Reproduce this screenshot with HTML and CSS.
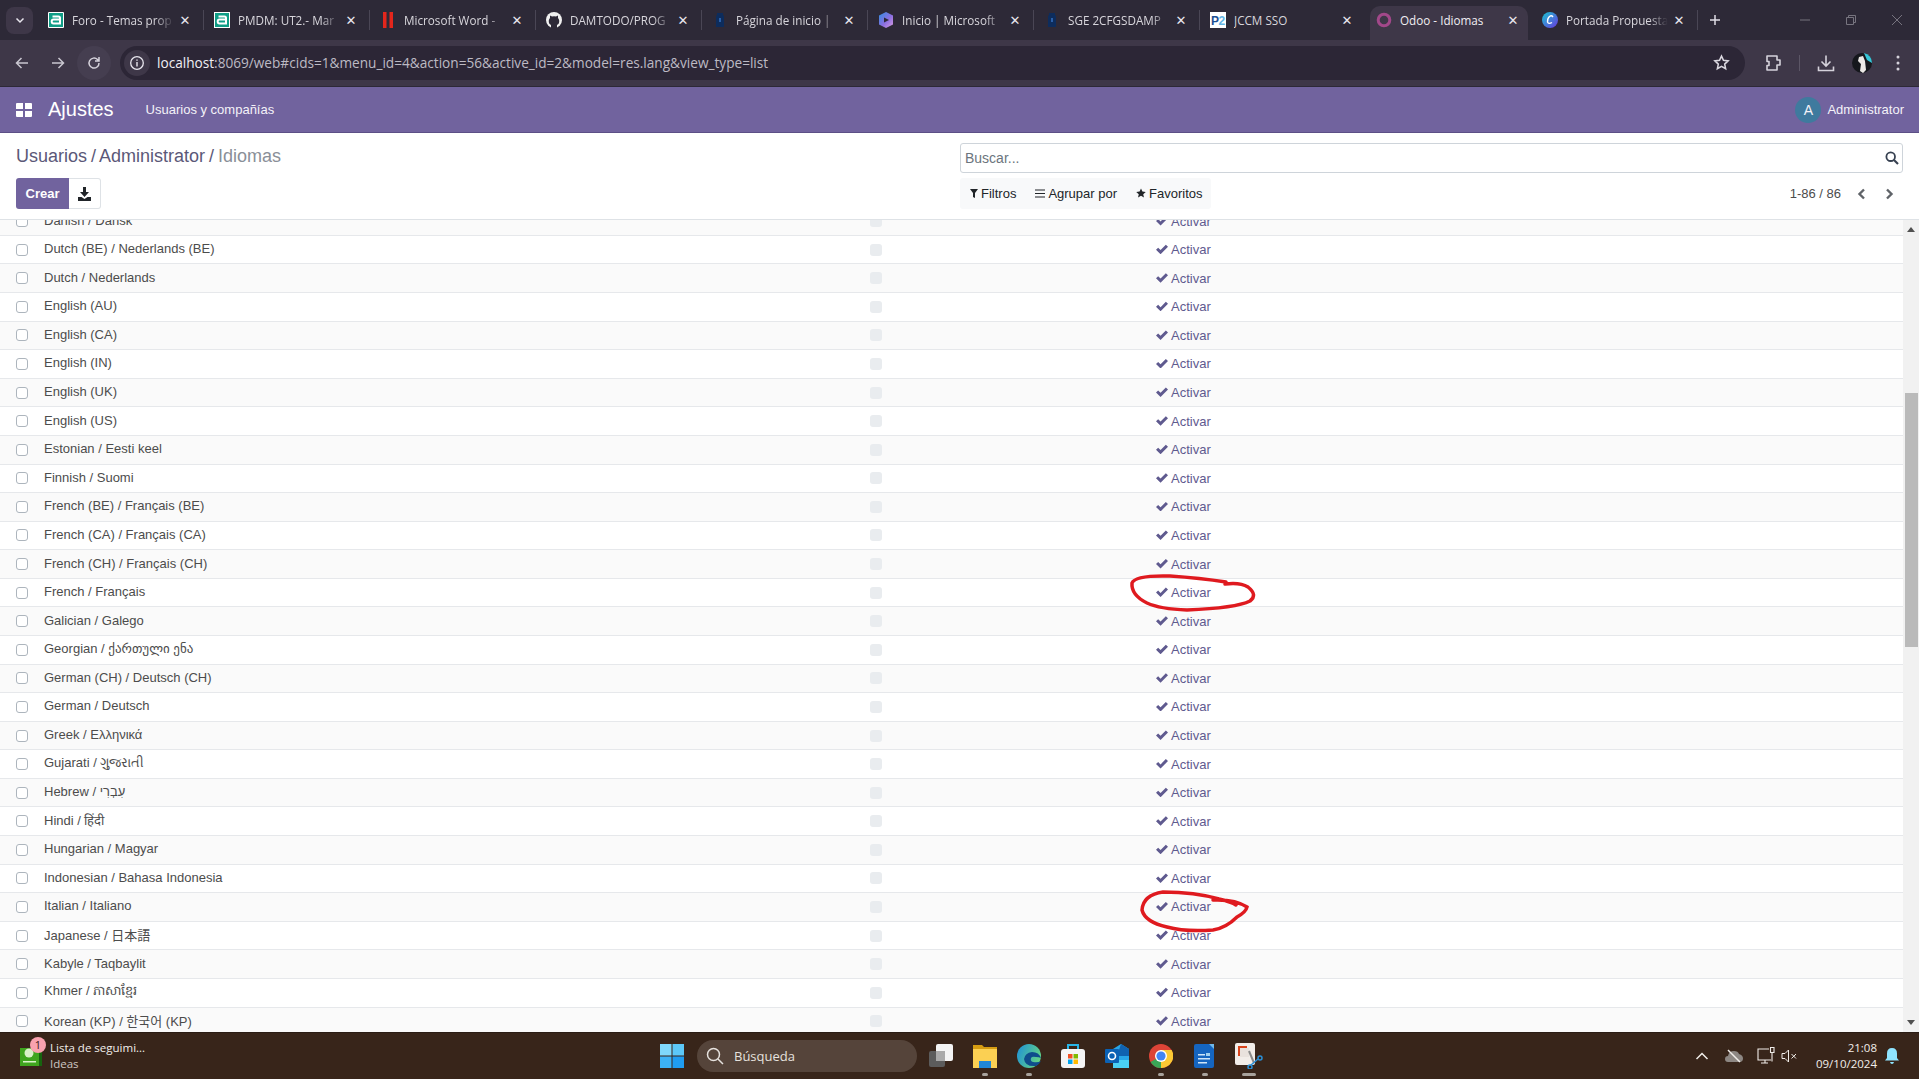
FILE: index.html
```html
<!DOCTYPE html>
<html lang="es">
<head>
  <meta charset="UTF-8" />
  <title>Odoo - Idiomas</title>
  <link rel="stylesheet" href="styles.css">
</head>
<body>

  <!-- browser tabs -->
  <div class="tabstrip">
    <button class="tab-search"><svg width="10" height="10" viewBox="0 0 10 10"><path d="M1.5 3.5 5 7l3.5-3.5" fill="none" stroke="#e8e6ee" stroke-width="1.5"/></svg></button>
    <div class="tab">
      <svg class="favicon" viewBox="0 0 16 16"><rect width="16" height="16" rx="1" fill="#fff"/><path d="M1 1h14v14H1z" fill="#0f9d86"/><path d="M4.5 4.5h6q1.5 0 1.5 1.5v5.500H5.500q-1.800 0-1.800-2t1.800-2H12" fill="none" stroke="#fff" stroke-width="2"/></svg>
      <span class="tab-title">Foro - Temas prop</span><span class="tab-close">✕</span>
    </div>
    <div class="tab">
      <svg class="favicon" viewBox="0 0 16 16"><path d="M0 0h16v16H0z" fill="#fff"/><path d="M1 1h14v14H1z" fill="#0f9d86"/><path d="M4.500 4.500h6q1.500 0 1.500 1.500v5.500H5.500q-1.800 0-1.800-2t1.800-2H12" fill="none" stroke="#fff" stroke-width="2"/></svg>
      <span class="tab-title">PMDM: UT2.- Mar</span><span class="tab-close">✕</span>
    </div>
    <div class="tab">
      <svg class="favicon" viewBox="0 0 16 16"><path d="M3 0h3.500v16H3zM9.500 0H13v16H9.500z" fill="#e3261c"/></svg>
      <span class="tab-title">Microsoft Word -</span><span class="tab-close">✕</span>
    </div>
    <div class="tab">
      <svg class="favicon" viewBox="0 0 16 16"><circle cx="8" cy="8" r="8" fill="#f0f0f0"/><path d="M5 16v-3Q2.500 12 2.800 8.500 3 7 4 6V3.500L6 4.500q2-.6 4 0l2-1V6q1 1 1.200 2.500.3 3.500-2.200 4.500v3z" fill="#2d2937"/></svg>
      <span class="tab-title">DAMTODO/PROG</span><span class="tab-close">✕</span>
    </div>
    <div class="tab">
      <svg class="favicon" viewBox="0 0 16 16"><path d="M5 1h6v2l1 1v11H4V4l1-1z" fill="#0d2c5c"/><path d="M7 6h2v4H7z" fill="#2a5fa8"/></svg>
      <span class="tab-title">Página de inicio |</span><span class="tab-close">✕</span>
    </div>
    <div class="tab">
      <svg class="favicon" viewBox="0 0 16 16"><defs><linearGradient id="m365" x1="0" y1="0" x2="1" y2="1"><stop offset="0" stop-color="#2f8fe0"/><stop offset=".55" stop-color="#8a6ee0"/><stop offset="1" stop-color="#d99adf"/></linearGradient></defs><path d="M8 0l7 3.500v9L8 16l-7-3.500v-9z" fill="url(#m365)"/><path d="M6 5.500 11 8l-5 2.500z" fill="#2d2937"/></svg>
      <span class="tab-title">Inicio | Microsoft</span><span class="tab-close">✕</span>
    </div>
    <div class="tab">
      <svg class="favicon" viewBox="0 0 16 16"><path d="M5 1h6v2l1 1v11H4V4l1-1z" fill="#0d2c5c"/><path d="M7 6h2v4H7z" fill="#2a5fa8"/></svg>
      <span class="tab-title">SGE 2CFGSDAMP</span><span class="tab-close">✕</span>
    </div>
    <div class="tab tab-before-active">
      <svg class="favicon" viewBox="0 0 16 16"><rect width="16" height="16" fill="#fff"/><text x="1" y="12.500" font-size="12" font-weight="700" font-family="Liberation Sans" fill="#1c4f93">P</text><text x="8.500" y="12.500" font-size="12" font-weight="700" font-family="Liberation Sans" fill="#62b5e5">2</text></svg>
      <span class="tab-title">JCCM SSO</span><span class="tab-close">✕</span>
    </div>
    <div class="tab tab-active">
      <svg class="favicon" viewBox="0 0 16 16"><circle cx="8" cy="8" r="5.800" fill="none" stroke="#a2488a" stroke-width="3"/></svg>
      <span class="tab-title">Odoo - Idiomas</span><span class="tab-close">✕</span>
    </div>
    <div class="tab">
      <svg class="favicon" viewBox="0 0 16 16"><defs><linearGradient id="canva" x1="0" y1="0" x2="1" y2="1"><stop offset="0" stop-color="#19c5cf"/><stop offset="1" stop-color="#6a37e0"/></linearGradient></defs><circle cx="8" cy="8" r="8" fill="url(#canva)"/><path d="M11 5Q9.500 3 7.500 4.500T5.500 10q1 2.500 4.500 .5" fill="none" stroke="#fff" stroke-width="1.400"/></svg>
      <span class="tab-title">Portada Propuesta</span><span class="tab-close">✕</span>
    </div>
    <svg class="new-tab" width="12" height="12" viewBox="0 0 12 12"><path d="M6 1v10M1 6h10" stroke="#e0dde6" stroke-width="1.500"/></svg>
    <div class="window-controls">
      <svg width="12" height="12" viewBox="0 0 12 12"><path d="M1 6h10" stroke="#77747f"/></svg>
      <svg width="12" height="12" viewBox="0 0 12 12"><path d="M1.500 3.500h7v7h-7zM3.500 3.500v-2h7v7h-2" fill="none" stroke="#77747f"/></svg>
      <svg width="12" height="12" viewBox="0 0 12 12"><path d="M1 1l10 10M11 1 1 11" stroke="#77747f"/></svg>
    </div>
  </div>

  <!-- address bar -->
  <div class="toolbar">
    <svg class="tool-icon" width="16" height="16" viewBox="0 0 16 16"><path d="M14 8H3M7.500 3 2.500 8l5 5" fill="none" stroke="#c9c6d0" stroke-width="1.500"/></svg>
    <svg class="tool-icon" width="16" height="16" viewBox="0 0 16 16"><path d="M2 8h11M8.500 3l5 5-5 5" fill="none" stroke="#c9c6d0" stroke-width="1.500"/></svg>
    <div class="reload"><svg width="16" height="16" viewBox="0 0 16 16"><path d="M13 8a5 5 0 1 1-1.500-3.500L13 6M13 2v4H9" fill="none" stroke="#d5d2db" stroke-width="1.500"/></svg></div>
    <div class="omnibox">
      <span class="site-info"><svg width="16" height="16" viewBox="0 0 16 16"><circle cx="8" cy="8" r="6.300" fill="none" stroke="#e8e6ee" stroke-width="1.300"/><path d="M8 7v4.500M8 4.500v1.300" stroke="#e8e6ee" stroke-width="1.400"/></svg></span>
      <span class="url"><b>localhost</b>:8069/web#cids=1&amp;menu_id=4&amp;action=56&amp;active_id=2&amp;model=res.lang&amp;view_type=list</span>
      <svg class="star" width="17" height="17" viewBox="0 0 24 24"><path d="m12 3 2.800 6 6.500.8-4.800 4.400 1.300 6.500L12 17.400 6.200 20.700l1.300-6.500L2.700 9.800 9.200 9z" fill="none" stroke="#dbd8e0" stroke-width="2.200"/></svg>
    </div>
    <svg class="ext" width="18" height="18" viewBox="0 0 18 18"><path d="M3 2h10v4h3v5h-3v5H3v-4.500h2v-4H3z" fill="none" stroke="#d5d2db" stroke-width="1.600" stroke-linejoin="round"/></svg>
    <span class="tool-sep"></span>
    <svg class="down" width="18" height="18" viewBox="0 0 18 18"><path d="M9 1.500v10M4.500 7.500 9 12l4.500-4.500M1.500 12.500v4h15v-4" fill="none" stroke="#d5d2db" stroke-width="1.600"/></svg>
    <svg class="profile" width="20" height="20" viewBox="0 0 20 20"><circle cx="10" cy="10" r="10" fill="#15171c"/><path d="M12 0a10 10 0 0 1 8 10l-5-3z" fill="#35c6d8"/><path d="M7 4l4-1 2 5 1 9-3 3-3-2 1-7-3-3z" fill="#ece9e6"/></svg>
    <svg class="dots" width="4" height="16" viewBox="0 0 4 16"><circle cx="2" cy="2" r="1.500" fill="#d5d2db"/><circle cx="2" cy="8" r="1.500" fill="#d5d2db"/><circle cx="2" cy="14" r="1.500" fill="#d5d2db"/></svg>
  </div>

  <!-- odoo navbar -->
  <nav class="navbar">
    <svg class="apps" width="16" height="14" viewBox="0 0 16 14"><path d="M1 0h6v6H0V1q0-1 1-1zM9 0h6q1 0 1 1v5H9zM0 8h7v6H1q-1 0-1-1zM9 8h7v5q0 1-1 1H9z" fill="#fff"/></svg>
    <span class="brand">Ajustes</span>
    <a class="nav-link">Usuarios y compañías</a>
    <div class="user-menu">
      <span class="user-avatar">A</span>
      <span>Administrator</span>
    </div>
  </nav>

  <div class="control-panel">
    <div class="breadcrumb"><a>Usuarios</a> / <a>Administrator</a> / <span>Idiomas</span></div>
    <div class="searchbox">
      <span>Buscar...</span>
      <svg width="14" height="14" viewBox="0 0 14 14"><circle cx="5.700" cy="5.700" r="4.300" fill="none" stroke="#374151" stroke-width="1.800"/><path d="m9 9 4 4" stroke="#374151" stroke-width="2.200"/></svg>
    </div>
    <div class="main-buttons">
      <button class="btn-create">Crear</button>
      <button class="btn-download"><svg width="13" height="14" viewBox="0 0 13 14"><path d="M5 0h3v5h3L6.500 10 2 5h3zM0 10h3.500l3 2 3-2H13v4H0z" fill="#212529"/></svg></button>
    </div>
    <div class="search-tools">
      <div class="filter-bar">
        <span><svg width="8" height="9" viewBox="0 0 8 9"><path d="M0 0h8L5 4v5L3 8V4z" fill="#212529"/></svg>Filtros</span>
        <span><svg width="10" height="9" viewBox="0 0 10 9"><path d="M0 1h10M0 4.500h10M0 8h10" stroke="#212529" stroke-width="1.200"/></svg>Agrupar por</span>
        <span><svg width="10" height="10" viewBox="0 0 24 24"><path d="m12 1 3.400 7.400 8 .9-6 5.400 1.700 8L12 18.700l-7.100 4 1.700-8-6-5.400 8-.9z" fill="#212529"/></svg>Favoritos</span>
      </div>
      <div class="pager">
        <span class="pager-count">1-86 / 86</span>
        <svg width="9" height="12" viewBox="0 0 9 12"><path d="M7 1.500 2.500 6 7 10.500" fill="none" stroke="#5f6368" stroke-width="2.400"/></svg>
        <svg width="9" height="12" viewBox="0 0 9 12"><path d="M2 1.500 6.500 6 2 10.500" fill="none" stroke="#5f6368" stroke-width="2.400"/></svg>
      </div>
    </div>
  </div>

  <!-- language list, scrolled part way down -->
  <div class="list-area">
    <div class="list-rows">
      <div class="row"><span class="check"></span><span class="name">Danish / Dansk</span><span class="flag"></span><a class="activate">Activar</a></div>
      <div class="row"><span class="check"></span><span class="name">Dutch (BE) / Nederlands (BE)</span><span class="flag"></span><a class="activate">Activar</a></div>
      <div class="row"><span class="check"></span><span class="name">Dutch / Nederlands</span><span class="flag"></span><a class="activate">Activar</a></div>
      <div class="row"><span class="check"></span><span class="name">English (AU)</span><span class="flag"></span><a class="activate">Activar</a></div>
      <div class="row"><span class="check"></span><span class="name">English (CA)</span><span class="flag"></span><a class="activate">Activar</a></div>
      <div class="row"><span class="check"></span><span class="name">English (IN)</span><span class="flag"></span><a class="activate">Activar</a></div>
      <div class="row"><span class="check"></span><span class="name">English (UK)</span><span class="flag"></span><a class="activate">Activar</a></div>
      <div class="row"><span class="check"></span><span class="name">English (US)</span><span class="flag"></span><a class="activate">Activar</a></div>
      <div class="row"><span class="check"></span><span class="name">Estonian / Eesti keel</span><span class="flag"></span><a class="activate">Activar</a></div>
      <div class="row"><span class="check"></span><span class="name">Finnish / Suomi</span><span class="flag"></span><a class="activate">Activar</a></div>
      <div class="row"><span class="check"></span><span class="name">French (BE) / Français (BE)</span><span class="flag"></span><a class="activate">Activar</a></div>
      <div class="row"><span class="check"></span><span class="name">French (CA) / Français (CA)</span><span class="flag"></span><a class="activate">Activar</a></div>
      <div class="row"><span class="check"></span><span class="name">French (CH) / Français (CH)</span><span class="flag"></span><a class="activate">Activar</a></div>
      <div class="row"><span class="check"></span><span class="name">French / Français</span><span class="flag"></span><a class="activate">Activar</a></div>
      <div class="row"><span class="check"></span><span class="name">Galician / Galego</span><span class="flag"></span><a class="activate">Activar</a></div>
      <div class="row"><span class="check"></span><span class="name">Georgian / ქართული ენა</span><span class="flag"></span><a class="activate">Activar</a></div>
      <div class="row"><span class="check"></span><span class="name">German (CH) / Deutsch (CH)</span><span class="flag"></span><a class="activate">Activar</a></div>
      <div class="row"><span class="check"></span><span class="name">German / Deutsch</span><span class="flag"></span><a class="activate">Activar</a></div>
      <div class="row"><span class="check"></span><span class="name">Greek / Ελληνικά</span><span class="flag"></span><a class="activate">Activar</a></div>
      <div class="row"><span class="check"></span><span class="name">Gujarati / ગુજરાતી</span><span class="flag"></span><a class="activate">Activar</a></div>
      <div class="row"><span class="check"></span><span class="name">Hebrew / עִבְרִי</span><span class="flag"></span><a class="activate">Activar</a></div>
      <div class="row"><span class="check"></span><span class="name">Hindi / हिंदी</span><span class="flag"></span><a class="activate">Activar</a></div>
      <div class="row"><span class="check"></span><span class="name">Hungarian / Magyar</span><span class="flag"></span><a class="activate">Activar</a></div>
      <div class="row"><span class="check"></span><span class="name">Indonesian / Bahasa Indonesia</span><span class="flag"></span><a class="activate">Activar</a></div>
      <div class="row"><span class="check"></span><span class="name">Italian / Italiano</span><span class="flag"></span><a class="activate">Activar</a></div>
      <div class="row"><span class="check"></span><span class="name">Japanese / 日本語</span><span class="flag"></span><a class="activate">Activar</a></div>
      <div class="row"><span class="check"></span><span class="name">Kabyle / Taqbaylit</span><span class="flag"></span><a class="activate">Activar</a></div>
      <div class="row"><span class="check"></span><span class="name">Khmer / ភាសាខ្មែរ</span><span class="flag"></span><a class="activate">Activar</a></div>
      <div class="row"><span class="check"></span><span class="name">Korean (KP) / 한국어 (KP)</span><span class="flag"></span><a class="activate">Activar</a></div>
    </div>
    <div class="scrollbar">
      <span class="arrow-up"></span>
      <span class="thumb"></span>
      <span class="arrow-down"></span>
    </div>
  </div>

  <!-- windows taskbar -->
  <footer class="taskbar">
    <div class="widget">
      <svg width="22" height="20" viewBox="0 0 22 20"><path d="M0 2h21v18H0z" fill="#3fa51e"/><path d="M19 2h3v18h-3z" fill="#17640f"/><circle cx="9" cy="7" r="4.500" fill="#d9f2c8"/><path d="M3 15h13v1.500H3z" fill="#d9f2c8"/></svg>
      <span class="widget-badge">1</span>
      <div class="widget-text"><span>Lista de seguimi...</span><span class="widget-sub">Ideas</span></div>
    </div>
    <div class="task-center">
      <svg class="win-logo" width="24" height="24" viewBox="0 0 24 24"><path d="M0 0h11.500v11.500H0z" fill="#7fd8fb"/><path d="M12.500 0H24v11.500H12.500z" fill="#5cc8f8"/><path d="M0 12.500h11.500V24H0z" fill="#3cb2f5"/><path d="M12.500 12.500H24V24H12.500z" fill="#1f9cf0"/></svg>
      <div class="task-search">
        <svg width="18" height="18" viewBox="0 0 18 18"><circle cx="7.500" cy="7.500" r="6" fill="none" stroke="#e6e2de" stroke-width="1.500"/><path d="m12 12 5 5" stroke="#e6e2de" stroke-width="1.500"/></svg>
        <span>Búsqueda</span>
      </div>
      <div class="task-icons">
        <span class="task-icon"><svg width="24" height="24" viewBox="0 0 24 24"><rect y="7" width="16" height="16" rx="2" fill="#5c5c5c"/><rect x="7" y="0" width="17" height="17" rx="2" fill="#f4f4f4"/><rect x="7" y="7" width="9" height="10" fill="#aaa"/></svg></span>
        <span class="task-icon open"><svg width="24" height="24" viewBox="0 0 24 24"><path d="M0 1h9l2 2h13v4H0z" fill="#d59c12"/><path d="M0 5h24v19H0z" fill="#fbd053"/><path d="M6 17h12v7H6z" fill="#1f86d6"/></svg></span>
        <span class="task-icon open"><svg width="24" height="24" viewBox="0 0 24 24"><defs><linearGradient id="edge" x1="0" y1="0" x2="1" y2=".4"><stop offset="0" stop-color="#1d8fd8"/><stop offset="1" stop-color="#5fd08a"/></linearGradient></defs><circle cx="12" cy="12" r="12" fill="url(#edge)"/><path d="M24 14q-2-6-9-6-7 1-8 7 1 8 12 7 3-1 5-5-3 2-8 1-3-1-2-4 1-2 5-1 3 0 5 1z" fill="#0f4d8c"/></svg></span>
        <span class="task-icon"><svg width="24" height="24" viewBox="0 0 24 24"><path d="M7 6V1h10v5" fill="none" stroke="#29b6e8" stroke-width="2"/><rect y="5" width="24" height="19" rx="3" fill="#f5f5f5"/><path d="M7 10h4.500v4.500H7z" fill="#f25022"/><path d="M12.500 10H17v4.500h-4.500z" fill="#7fba00"/><path d="M7 15.500h4.500V20H7z" fill="#00a4ef"/><path d="M12.500 15.500H17V20h-4.500z" fill="#ffb900"/></svg></span>
        <span class="task-icon"><svg width="24" height="24" viewBox="0 0 24 24"><path d="M8 5l8-5 8 5v15q0 4-4 4H8z" fill="#27a6e8"/><path d="M16 0l8 5v7H12z" fill="#1062b0"/><path d="M8 16h16v8H8z" fill="#4ad1f5"/><rect y="5" width="14" height="14" rx="1" fill="#0b62b5"/><circle cx="7" cy="12" r="3.500" fill="none" stroke="#fff" stroke-width="1.600"/></svg></span>
        <span class="task-icon open"><svg width="24" height="24" viewBox="0 0 24 24"><circle cx="12" cy="12" r="12" fill="#dc4437"/><path d="M12 12 1.600 18A12 12 0 0 0 14 23.800z" fill="#3aa757"/><path d="M12 6h10.600A12 12 0 0 1 12 24z" fill="#fcc934"/><circle cx="12" cy="12" r="6" fill="#fff"/><circle cx="12" cy="12" r="4.600" fill="#4285f4"/></svg></span>
        <span class="task-icon open"><svg width="24" height="24" viewBox="0 0 24 24"><path d="M3 0h14l4 4v18q0 2-2 2H3q-2 0-2-2V2q0-2 2-2z" fill="#1565c0"/><path d="M16 0h5v5z" fill="#6fb8ea"/><path d="M5 10h7v1.500H5zM5 14h12v1.500H5zM5 18h9v1.500H5z" fill="#cfe6f8"/><path d="M13 9h4v3h-4z" fill="#9fd0f0"/></svg></span>
        <span class="task-icon wide"><svg width="28" height="26" viewBox="0 0 28 26"><rect width="20" height="22" rx="2" fill="#f2ede9"/><path d="M3 3h9v2H5v8H3z" fill="#d8431b"/><path d="M5 5h9v9H5z" fill="#e9e2dd"/><path d="M14 8l5 12" stroke="#8a8a8a" stroke-width="2"/><circle cx="15" cy="24" r="2" fill="none" stroke="#2a8fd6" stroke-width="1.500"/><circle cx="25" cy="15" r="2" fill="none" stroke="#2a8fd6" stroke-width="1.500"/><path d="M16 22l7-6" stroke="#2a8fd6" stroke-width="1.500"/></svg></span>
      </div>
    </div>
    <div class="tray">
      <svg class="tray-chevron" width="14" height="8" viewBox="0 0 14 8"><path d="M1.500 7 7 1.500 12.500 7" fill="none" stroke="#f0ece8" stroke-width="1.500"/></svg>
      <svg class="tray-cloud" width="18" height="14" viewBox="0 0 18 14"><path d="M3 13a3 3 0 0 1 0-6q1-5 6-5 4 0 5 3 4 1 4 4.500T14 13z" fill="#8d8783"/><path d="M3 1l12 12" stroke="#f0ece8" stroke-width="1.500"/></svg>
      <svg class="tray-net" width="18" height="18" viewBox="0 0 18 18"><path d="M12 2H1v11h13M8 13v3M4 16h7" fill="none" stroke="#f0ece8" stroke-width="1.100"/><path d="M13.500 .5h3.500v5h-3.500zM15 5.500v9" fill="none" stroke="#f0ece8" stroke-width="1.100"/></svg>
      <svg class="tray-sound" width="16" height="14" viewBox="0 0 16 14"><path d="M1 4.500h3L7.500 1v12L4 9.500H1zM10.500 5l4.500 4.500M15 5l-4.500 4.500" fill="none" stroke="#f0ece8"/></svg>
      <div class="clock"><span>21:08</span><span>09/10/2024</span></div>
      <svg class="bell" width="14" height="16" viewBox="0 0 14 16"><path d="M7 0q5 0 5 5.500V10l2 2.500H0L2 10V5.500Q2 0 7 0zM5 14h4q-.5 2-2 2t-2-2z" fill="#8fe4ff"/></svg>
    </div>
  </footer>

  <!-- hand-drawn marks on top of the screenshot -->
  <svg class="scribbles" width="1919" height="1079" viewBox="0 0 1919 1079">
    <path d="M1225 584Q1240 582 1248 587 1258 595 1250 601 1236 608 1187 610 1160 609 1147 603 1131 595 1132 583 1135 575 1170 576 1200 578 1226 582" />
    <path d="M1213 900Q1235 899 1247 907 1246 912 1237 917 1226 928 1213 930 1185 932 1167 927 1145 922 1142 910 1143 895 1163 892 1195 892 1219 899 1232 902 1236 905" />
  </svg>

</body>
</html>
```

FILE: styles.css
```css
* {
  box-sizing: border-box;
}

html, body {
  height: 100%;
}

body {
  position: relative;
  display: flex;
  flex-direction: column;
  margin: 0;
  overflow: hidden;
  font-family: "Liberation Sans", Arial, sans-serif;
  font-size: 13px;
  color: #4c4c4c;
  background: #fff;
}

/* browser chrome */
.tabstrip {
  display: flex;
  align-items: center;
  flex: 0 0 40px;
  padding-left: 6px;
  background: #2d2937;
  font-family: "Open Sans", sans-serif;
  font-size: 11.700px;
  color: #d8d6dc;
}

.tab-search {
  display: flex;
  align-items: center;
  justify-content: center;
  flex: 0 0 27px;
  height: 27px;
  margin-right: 5px;
  padding: 0;
  border: none;
  border-radius: 8px;
  background: #3e3748;
}

.tab {
  display: flex;
  align-items: center;
  flex: 0 0 166px;
  min-width: 0;
  height: 40px;
  padding: 0 12px 0 10px;
  position: relative;
}

.tab::after {
  content: "";
  position: absolute;
  right: 0;
  top: 10px;
  height: 20px;
  width: 1px;
  background: #4a4655;
}

.tab-before-active::after {
  display: none;
}

.tab-active {
  flex-basis: 158px;
  height: 34px;
  margin: 6px 4px 0;
  padding: 0 8px 6px 6px;
  border-radius: 10px 10px 0 0;
  background: #3e3748;
  color: #f0eef3;
}

.tab-active::after {
  display: none;
}

.favicon {
  flex: 0 0 16px;
  width: 16px;
  height: 16px;
  margin-right: 8px;
}

.tab-title {
  flex: 1;
  min-width: 0;
  white-space: nowrap;
  overflow: hidden;
  -webkit-mask-image: linear-gradient(to right, #000 80%, transparent 98%);
  mask-image: linear-gradient(to right, #000 80%, transparent 98%);
}

.tab-active .tab-title,
.tab-before-active .tab-title {
  -webkit-mask-image: none;
  mask-image: none;
}

.tab-close {
  flex: 0 0 14px;
  margin-left: 2px;
  font-family: "DejaVu Sans", sans-serif;
  font-size: 13px;
  text-align: center;
  color: #e8e6ee;
}

.new-tab {
  flex: 0 0 12px;
  margin-left: 11px;
}

.window-controls {
  display: flex;
  gap: 34px;
  margin-left: auto;
  padding-right: 16px;
}

.toolbar {
  display: flex;
  align-items: center;
  flex: 0 0 47px;
  padding: 0 0 1px 14px;
  background: #3e3748;
  border-bottom: 1px solid #2d2937;
}

.tool-icon {
  margin-right: 20px;
}

.reload {
  display: flex;
  align-items: center;
  justify-content: center;
  width: 34px;
  height: 34px;
  margin-left: -9px;
  border-radius: 50%;
  background: #453e50;
}

.omnibox {
  display: flex;
  align-items: center;
  width: 1625px;
  height: 34px;
  margin-left: 9px;
  padding: 0 15px 0 4px;
  border-radius: 17px;
  background: #2c2636;
  font-family: "Open Sans", sans-serif;
  font-size: 13.630px;
  color: #bdbac4;
}

.site-info {
  display: flex;
  align-items: center;
  justify-content: center;
  width: 26px;
  height: 26px;
  margin-right: 7px;
  border-radius: 50%;
  background: #3e3748;
}

.url b {
  font-weight: 400;
  color: #f1eff4;
}

.star {
  margin-left: auto;
}

.ext {
  margin-left: 19px;
}

.tool-sep {
  width: 1px;
  height: 16px;
  margin-left: 17px;
  background: #5c5666;
}

.down {
  margin-left: 17px;
}

.profile {
  margin-left: 17px;
}

.dots {
  margin-left: 24px;
}

/* odoo */
.navbar {
  display: flex;
  align-items: center;
  flex: 0 0 46px;
  padding: 0 15px 0 16px;
  background: #71639e;
  border-bottom: 1px solid #5c4f86;
  color: #fff;
}

.brand {
  margin-left: 16px;
  font-size: 20px;
}

.nav-link {
  margin-left: 32px;
  font-weight: 400;
  color: #f4f2f8;
}

.user-menu {
  display: flex;
  align-items: center;
  gap: 6px;
  margin-left: auto;
  color: #f4f2f8;
}

.user-avatar {
  display: flex;
  align-items: center;
  justify-content: center;
  width: 26px;
  height: 26px;
  border-radius: 50%;
  background: #3f7a9e;
  font-size: 14px;
}

.control-panel {
  display: grid;
  grid-template-columns: 1fr 943px;
  grid-template-rows: 30px 31px;
  row-gap: 5px;
  flex: 0 0 87px;
  padding: 10px 16px 0;
  border-bottom: 1px solid #dee2e6;
}

.breadcrumb {
  margin-top: 3px;
  font-size: 18px;
  word-spacing: -1px;
  color: #5b5878;
}

.breadcrumb a {
  color: #5b5878;
}

.breadcrumb span {
  color: #8a8f98;
}

.searchbox {
  display: flex;
  align-items: center;
  justify-content: space-between;
  padding: 0 3px 0 4px;
  border: 1px solid #ced4da;
  border-radius: 3px;
  color: #6c757d;
  font-size: 14px;
}

.main-buttons {
  display: flex;
}

.btn-create {
  width: 53px;
  padding: 0;
  border: none;
  border-radius: 3px 0 0 3px;
  background: #71639e;
  color: #fff;
  font: 700 13px "Liberation Sans", Arial, sans-serif;
}

.btn-download {
  display: flex;
  align-items: center;
  justify-content: center;
  width: 32px;
  padding: 0;
  background: #fff;
  border: 1px solid #dee2e6;
  border-left: none;
  border-radius: 0 3px 3px 0;
}

.search-tools {
  display: flex;
  align-items: center;
  justify-content: space-between;
}

.filter-bar {
  display: flex;
  align-items: center;
  gap: 19px;
  width: 251px;
  height: 31px;
  padding: 0 10px;
  border-radius: 3px;
  background: #f8f9fa;
  color: #212529;
  white-space: nowrap;
}

.filter-bar svg {
  margin-right: 3px;
}

.pager {
  display: flex;
  align-items: center;
  gap: 19px;
  padding-right: 9px;
  color: #4c4c4c;
}

.pager-count {
  margin-right: -3px;
}

.list-area {
  display: flex;
  flex: 1;
  min-height: 0;
  overflow: hidden;
}

.list-rows {
  flex: 1;
  min-width: 0;
  margin-top: -12.700px;
}

.row {
  display: flex;
  align-items: center;
  height: 28.580px;
  padding-left: 16px;
  border-bottom: 1px solid #e6e8eb;
  background: #fff;
}

.row:nth-child(odd) {
  background: #fafafa;
}

.check {
  flex: 0 0 12px;
  height: 12px;
  border: 1px solid #adb5bd;
  border-radius: 3px;
  background: #fff;
}

.name {
  width: 842px;
  margin-bottom: 2px;
  padding-left: 16px;
  font-family: "Liberation Sans", "DejaVu Sans", "Noto Sans CJK JP", "Noto Sans CJK KR", sans-serif;
  white-space: nowrap;
}

.flag {
  flex: 0 0 12px;
  height: 12px;
  border-radius: 3px;
  background: #e9ecef;
}

.activate {
  margin-left: 274px;
  color: #5f5a8f;
}

.activate::before {
  content: "";
  display: inline-block;
  width: 12px;
  height: 10px;
  margin-right: 3px;
  background: #5f5a8f;
  clip-path: polygon(0 55%, 18% 35%, 38% 58%, 82% 5%, 100% 25%, 38% 100%);
}

.scrollbar {
  position: relative;
  flex: 0 0 16px;
  background: #f1f1f1;
}

.thumb {
  position: absolute;
  left: 2px;
  top: 173px;
  width: 13px;
  height: 254px;
  background: #bababa;
}

.arrow-up,
.arrow-down {
  position: absolute;
  left: 4px;
  width: 0;
  height: 0;
  border-left: 4px solid transparent;
  border-right: 4px solid transparent;
}

.arrow-up {
  top: 7px;
  border-bottom: 5px solid #505050;
}

.arrow-down {
  bottom: 7px;
  border-top: 5px solid #505050;
}

/* windows taskbar */
.taskbar {
  display: grid;
  grid-template-columns: 660px auto 1fr;
  align-items: center;
  flex: 0 0 47px;
  background: #38251a;
  border-top: 1px solid #2a1c14;
  font-family: "Open Sans", sans-serif;
  font-size: 11.500px;
  color: #f2eeea;
}

.widget {
  position: relative;
  display: flex;
  align-items: center;
  padding-left: 20px;
}

.widget-badge {
  position: absolute;
  left: 30px;
  top: -3px;
  width: 16px;
  height: 16px;
  border-radius: 50%;
  background: #f9a2af;
  color: #3a1a1a;
  font-size: 11px;
  line-height: 16px;
  text-align: center;
}

.widget-text {
  display: flex;
  flex-direction: column;
  margin-left: 8px;
  line-height: 16px;
}

.widget-sub {
  color: #cdc7c2;
}

.task-center {
  display: flex;
  align-items: center;
}

.task-search {
  display: flex;
  align-items: center;
  gap: 10px;
  width: 220px;
  height: 32px;
  margin-left: 13px;
  padding-left: 9px;
  border-radius: 16px;
  background: #55443a;
  font-size: 13px;
  color: #e6e2de;
}

.task-icons {
  display: flex;
  margin-left: 2px;
}

.task-icon {
  position: relative;
  display: flex;
  align-items: center;
  justify-content: center;
  width: 44px;
  height: 46px;
}

.task-icon.open::after,
.task-icon.wide::after {
  content: "";
  position: absolute;
  bottom: 3px;
  left: 19px;
  width: 6px;
  height: 3px;
  border-radius: 2px;
  background: #a8a29c;
}

.task-icon.wide::after {
  left: 15px;
  width: 14px;
}

.tray {
  display: flex;
  align-items: center;
  justify-content: flex-end;
  padding-right: 20px;
}

.tray-cloud {
  margin-left: 16px;
}

.tray-net {
  margin-left: 14px;
}

.tray-sound {
  margin-left: 6px;
}

.clock {
  display: flex;
  flex-direction: column;
  align-items: flex-end;
  margin-left: 19px;
  line-height: 16px;
}

.bell {
  margin-left: 8px;
}

.scribbles {
  position: absolute;
  left: 0;
  top: 0;
  pointer-events: none;
}

.scribbles path {
  fill: none;
  stroke: #df1a1f;
  stroke-width: 3.500;
  stroke-linecap: round;
}
```
